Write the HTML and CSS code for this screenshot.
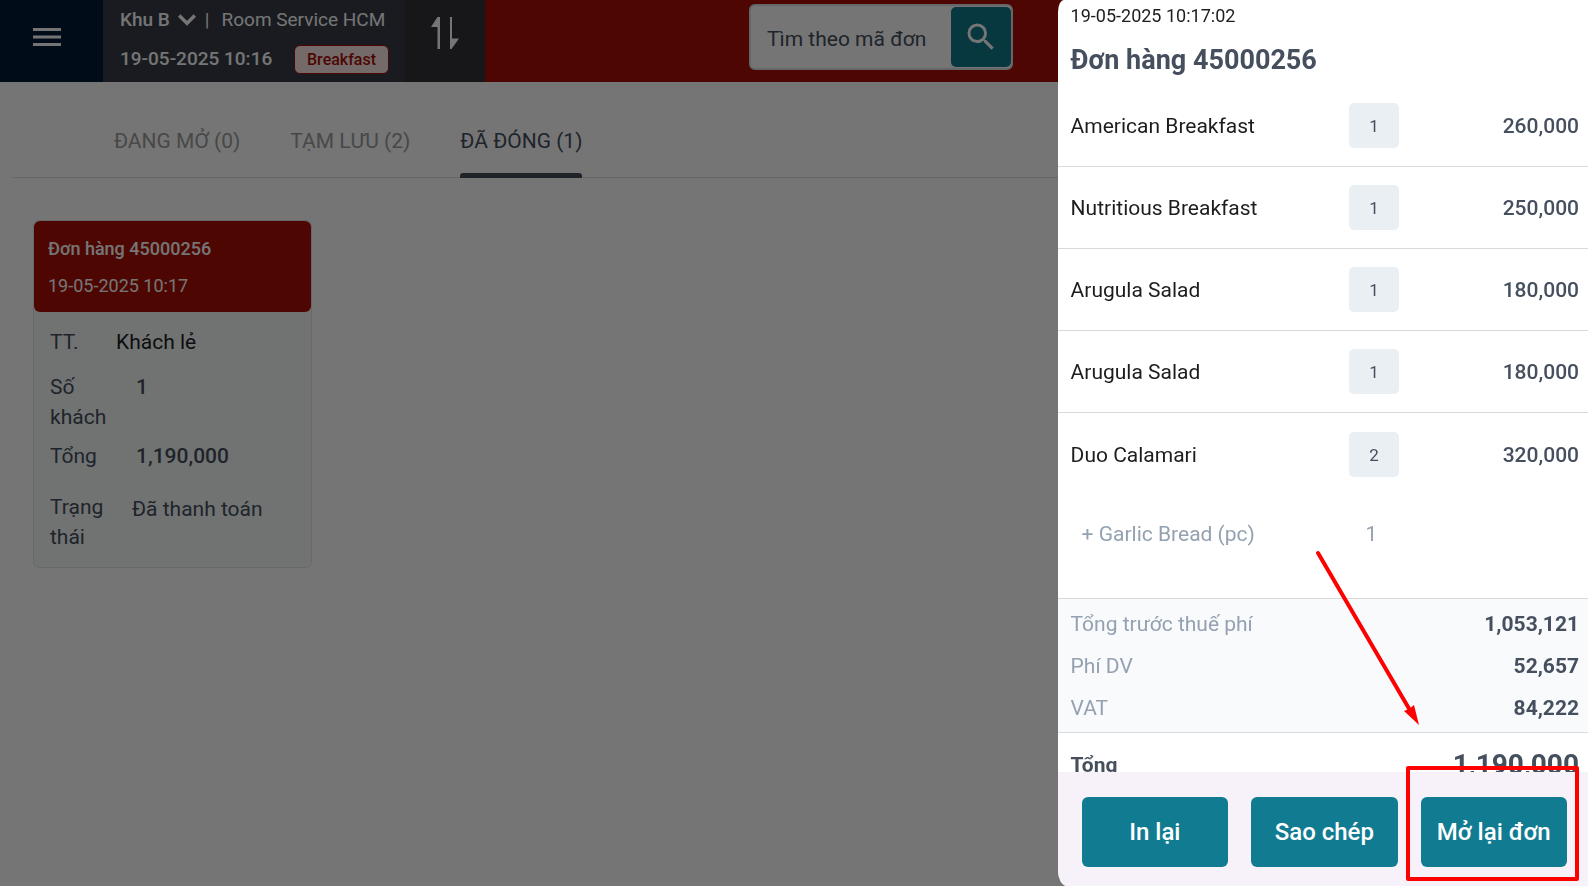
FILE: index.html
```html
<!DOCTYPE html>
<html lang="vi">
<head>
<meta charset="utf-8">
<meta name="viewport" content="width=device-width, initial-scale=1">
<title>Đơn hàng 45000256</title>
<link rel="stylesheet" href="styles.css">
</head>
<body>
<div class="page">
  <header class="topbar">
    <button class="menu" type="button" aria-label="Menu">
      <svg width="28" height="18" viewBox="0 0 28 18" fill="currentColor"><path d="M0 0h28v3H0zM0 7.500h28v3H0zM0 15h28v3H0z"/></svg>
    </button>
    <div class="outlet">
      <div class="outlet-row">
        <button class="zone" type="button">Khu B
          <svg width="18" height="12" viewBox="0 0 18 12" fill="none" stroke="currentColor" stroke-width="3.400"><path d="M1.200 1.500 9 9.300l7.800-7.800"/></svg>
        </button>
        <span class="bar">|</span>
        <span>Room Service HCM</span>
      </div>
      <div class="outlet-row">
        <strong class="clock">19-05-2025 10:16</strong>
        <span class="meal">Breakfast</span>
      </div>
    </div>
    <button class="swap" type="button" aria-label="Sắp xếp">
      <svg width="28" height="32" viewBox="0 0 28 32" fill="currentColor"><path d="M6.500 0h2.500v32H6.500V10H0zM19 0h2v21.500h7L20.500 32H19z"/></svg>
    </button>
    <form class="search">
      <input class="search-input" type="text" placeholder="Tìm theo mã đơn" aria-label="Tìm theo mã đơn">
      <button class="search-btn" type="button" aria-label="Tìm">
        <svg width="36" height="36" viewBox="0 0 24 24" fill="currentColor"><path d="M15.500 14h-.79l-.28-.27A6.470 6.470 0 0 0 16 9.500 6.500 6.500 0 1 0 9.500 16c1.610 0 3.090-.59 4.230-1.570l.27.28v.79l5 4.990L20.490 19l-4.990-5zm-6 0C7.010 14 5 11.990 5 9.500S7.010 5 9.500 5 14 7.010 14 9.500 11.990 14 9.500 14z"/></svg>
      </button>
    </form>
  </header>

  <nav class="tabs">
    <a class="tab" href="#open">ĐANG MỞ (0)</a>
    <a class="tab" href="#saved">TẠM LƯU (2)</a>
    <a class="tab active" href="#closed">ĐÃ ĐÓNG (1)</a>
  </nav>

  <main class="orders">
    <article class="card">
      <div class="card-head">
        <h2 class="card-title">Đơn hàng 45000256</h2>
        <p class="card-time">19-05-2025 10:17</p>
      </div>
      <dl class="card-body">
        <div class="fact fact-customer"><dt>TT.</dt><dd>Khách lẻ</dd></div>
        <div class="fact fact-number"><dt>Số khách</dt><dd>1</dd></div>
        <div class="fact fact-number"><dt>Tổng</dt><dd>1,190,000</dd></div>
        <div class="fact fact-status"><dt>Trạng thái</dt><dd>Đã thanh toán</dd></div>
      </dl>
    </article>
  </main>
</div>

<div class="backdrop"></div>

<aside class="drawer">
  <div class="drawer-body">
    <p class="order-time">19-05-2025 10:17:02</p>
    <h1 class="order-title">Đơn hàng 45000256</h1>
    <ul class="items">
      <li class="item"><span>American Breakfast</span><span class="qty">1</span><span class="price">260,000</span></li>
      <li class="item"><span>Nutritious Breakfast</span><span class="qty">1</span><span class="price">250,000</span></li>
      <li class="item"><span>Arugula Salad</span><span class="qty">1</span><span class="price">180,000</span></li>
      <li class="item"><span>Arugula Salad</span><span class="qty">1</span><span class="price">180,000</span></li>
      <li class="item"><span>Duo Calamari</span><span class="qty">2</span><span class="price">320,000</span></li>
      <li class="item extra"><span class="extra-name">+ Garlic Bread (pc)</span><span class="extra-qty">1</span></li>
    </ul>
    <dl class="sums">
      <div class="sum"><dt>Tổng trước thuế phí</dt><dd>1,053,121</dd></div>
      <div class="sum"><dt>Phí DV</dt><dd>52,657</dd></div>
      <div class="sum"><dt>VAT</dt><dd>84,222</dd></div>
    </dl>
    <div class="total"><span>Tổng</span><span class="total-value">1,190,000</span></div>
  </div>
  <footer class="actions">
    <div class="action"><button class="btn" type="button">In lại</button></div>
    <div class="action"><button class="btn" type="button">Sao chép</button></div>
    <div class="action marked">
      <button class="btn" type="button">Mở lại đơn</button>
      <svg class="arrow" width="108" height="178" viewBox="0 0 108 178"><path d="M4 4 97 163" stroke="#f00" stroke-width="4" stroke-linecap="round"/><path d="M105 176 90 162l5-2 5-4z" fill="#f00"/></svg>
    </div>
  </footer>
</aside>
</body>
</html>
```
FILE: styles.css
```css
* { box-sizing: border-box; }
body, h1, h2, p, ul, dl, dd { margin: 0; padding: 0; }
body {
  font-family: Roboto, "Noto Sans", sans-serif;
  font-size: 21px;
  line-height: 30px;
  color: #454f5e;
  background: #fff;
}
button, input { font: inherit; color: inherit; border: 0; margin: 0; padding: 0; background: none; }
svg { display: block; }
.page { height: 100vh; overflow: hidden; }

.topbar { display: flex; height: 82px; background: #a90f05; color: #fff; }
.menu { width: 103px; display: grid; place-items: center; padding: 0 9px 8px 0; background: #001c32; }
.outlet {
  width: 302px;
  padding: 0 16px 0 17px;
  display: flex;
  flex-direction: column;
  gap: 9px;
  background: #373c47;
  font-size: 19px;
}
.outlet-row { display: flex; align-items: center; white-space: nowrap; padding-top: 5px; }
.outlet-row + .outlet-row { justify-content: space-between; padding-top: 0; }
.zone { display: flex; align-items: center; gap: 8px; font-weight: 500; }
.bar { margin: 0 12px 0 9px; }
.clock { font-weight: 500; }
.meal {
  height: 29px;
  padding: 0 12px;
  border: 1px solid #a90f05;
  border-radius: 6px;
  background: #fde8e8;
  color: #a90f05;
  font-size: 16px;
  font-weight: 500;
  line-height: 28px;
}
.swap { width: 80px; display: grid; place-items: center; padding-bottom: 16px; background: #343437; }
.search {
  display: flex;
  width: 264px;
  height: 66px;
  margin: 4px 0 0 264px;
  border: 2px solid #dcdfe2;
  border-radius: 6px;
  background: #fff;
}
.search-input { flex: 1; min-width: 0; padding: 4px 0 0 16px; outline: none; }
.search-input::placeholder { color: #454f5e; opacity: 1; }
.search-btn {
  width: 60px;
  height: 60px;
  margin-top: 1px;
  display: grid;
  place-items: center;
  border-radius: 5px;
  background: #117a8b;
}

.tabs {
  display: flex;
  gap: 50px;
  height: 96px;
  margin-left: 12px;
  padding-left: 102px;
  border-bottom: 1px solid #e0e0e0;
}
.tab { padding-top: 44px; color: #9d9d9d; text-decoration: none; white-space: nowrap; }
.tab.active { margin-bottom: -1px; color: #454f5e; }
.tab.active::after {
  content: "";
  display: block;
  height: 5px;
  margin-top: 17px;
  border-radius: 3px 3px 0 0;
  background: #454f5e;
}

.orders { padding: 42px 33px; }
.card { width: 279px; border: 1px solid #dfe5e5; border-radius: 6px; background: #f5fbf9; }
.card-head { padding: 13px 14px 11px; border-radius: 6px; background: #a90f05; color: #fff; font-size: 18px; }
.card-title { font-size: 18px; font-weight: 500; }
.card-time { margin-top: 7px; }
.card-body { padding: 15px 16px; }
.fact { display: grid; grid-template-columns: 58px 1fr; column-gap: 28px; margin-bottom: 9px; }
.fact-customer { column-gap: 8px; margin-bottom: 15px; }
.fact-customer dd { color: #1d1d1f; }
.fact-number dd { font-weight: 500; }
.fact-status { column-gap: 24px; margin: 21px 0 0; }
.fact-status dd { padding-top: 2px; }

.backdrop { position: fixed; inset: 0; background: rgba(0, 0, 0, 0.54); }

.drawer {
  position: fixed;
  top: 0;
  right: 0;
  bottom: 0;
  width: 33.4%;
  display: flex;
  flex-direction: column;
  border-radius: 6px 0 0 9px / 12px 0 0 16px;
  background: #fff;
}
.drawer-body { flex: 1; min-height: 0; overflow: hidden; }
.order-time { padding: 1px 13px 0; font-size: 18px; color: #1d1d1f; }
.order-title { padding: 12px 13px 8px; font-size: 27px; font-weight: 700; line-height: 34px; }
.items { list-style: none; }
.item {
  display: grid;
  grid-template-columns: 1fr 50px 180px;
  align-items: center;
  height: 82px;
  padding: 0 9px 0 13px;
  border-bottom: 1px solid #d9d9d9;
  color: #1d1d1f;
}
.item:nth-child(5) { height: 83px; border-bottom: 0; }
.qty {
  height: 45px;
  border-radius: 5px;
  background: #eaeff4;
  color: #454f5e;
  font-size: 17px;
  line-height: 46px;
  text-align: center;
}
.price { color: #454f5e; font-weight: 500; text-align: right; }
.item.extra { height: 103px; padding: 0 9px 26px 24px; color: #94a1b1; }
.extra-qty { text-align: center; padding-right: 5px; }
.sums { padding: 4px 9px 3px 13px; border-bottom: 1px solid #d9dde1; background: #f8fafc; }
.sum { display: flex; justify-content: space-between; padding: 6px 0; }
.sum dt { color: #94a1b1; }
.sum dd { font-weight: 700; }
.total { display: flex; justify-content: space-between; align-items: center; padding: 17px 9px 16px 13px; font-weight: 700; }
.total-value { font-size: 28px; }

.actions { display: flex; gap: 23px; padding: 25px 21px 19px 24px; border-radius: 0 0 0 9px / 0 0 0 16px; background: #f7f1f9; }
.action { flex: 1; position: relative; }
.btn {
  width: 100%;
  height: 70px;
  border-radius: 6px;
  background: #117c91;
  color: #fff;
  font-size: 24px;
  font-weight: 500;
  white-space: nowrap;
}
.marked::after {
  content: "";
  position: absolute;
  inset: -31px -12px -14px -15px;
  border: 4px solid #f00;
  border-radius: 2px;
  pointer-events: none;
}
.arrow { position: absolute; left: -107px; bottom: 140px; pointer-events: none; }
```
